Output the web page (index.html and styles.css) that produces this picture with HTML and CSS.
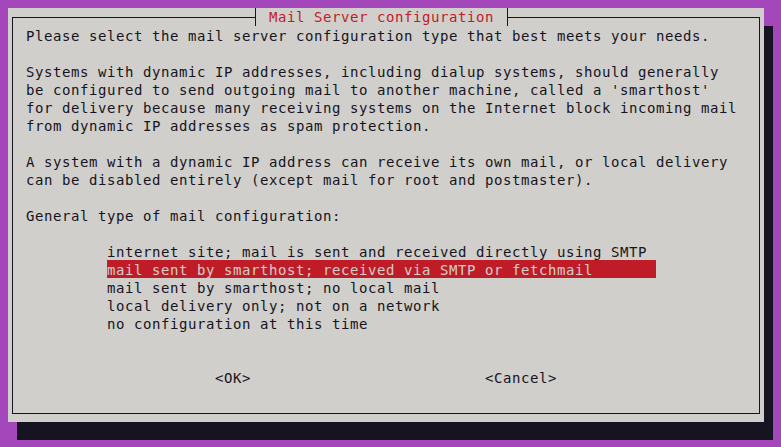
FILE: index.html
```html
<!DOCTYPE html>
<html>
<head>
<meta charset="utf-8">
<link rel="stylesheet" href="styles.css">
</head>
<body>
<div class="dialog">
  <div class="frame">
    <div class="title">Mail Server configuration</div>
    <div class="text">
      <div class="para">Please select the mail server configuration type that best meets your needs.</div>
      <div class="para">Systems with dynamic IP addresses, including dialup systems, should generally
be configured to send outgoing mail to another machine, called a 'smarthost'
for delivery because many receiving systems on the Internet block incoming mail
from dynamic IP addresses as spam protection.</div>
      <div class="para">A system with a dynamic IP address can receive its own mail, or local delivery
can be disabled entirely (except mail for root and postmaster).</div>
      <div class="para">General type of mail configuration:</div>
      <ul class="menu">
        <li class="item">internet site; mail is sent and received directly using SMTP</li>
        <li class="item selected">mail sent by smarthost; received via SMTP or fetchmail</li>
        <li class="item">mail sent by smarthost; no local mail</li>
        <li class="item">local delivery only; not on a network</li>
        <li class="item">no configuration at this time</li>
      </ul>
      <div class="buttons">
        <span class="btn ok">&lt;OK&gt;</span>
        <span class="btn cancel">&lt;Cancel&gt;</span>
      </div>
    </div>
  </div>
</div>
</body>
</html>
```
FILE: styles.css
```css
html, body {
  margin: 0;
  padding: 0;
  background: #a347ba;
  height: 100%;
  overflow: hidden;
}
body {
  font-family: "DejaVu Sans Mono", "Liberation Mono", monospace;
  font-size: 14px;
  letter-spacing: 0.5713px;
  line-height: 18px;
  color: #171421;
}
.dialog {
  margin: 8px 0 0 8px;
  width: 756px;
  height: 414px;
  box-sizing: border-box;
  padding: 9px 4px 8px 4px;
  background: #d0cfcc;
  box-shadow: 9px 18px 0 #171421;
}
.frame {
  position: relative;
  box-sizing: border-box;
  width: 748px;
  height: 397px;
  border: 1px solid #171421;
  padding: 8px 0 0 13px;
}
.title {
  position: absolute;
  top: -10px;
  left: 242px;
  width: 253px;
  height: 18px;
  box-sizing: border-box;
  border-left: 1px solid #171421;
  border-right: 1px solid #171421;
  background: #d0cfcc;
  color: #c01c28;
  padding: 1px 0 0 13px;
  line-height: 17px;
  white-space: pre;
}
.para {
  padding-top: 1px;
  margin-bottom: 17px;
  white-space: pre;
}
.menu {
  list-style: none;
  margin: 17px 0 0 81px;
  padding: 0;
}
.item {
  width: 549px;
  height: 18px;
  box-sizing: border-box;
  padding-top: 1px;
  white-space: pre;
}
.item.selected {
  background: #c01c28;
  color: #d0cfcc;
}
.buttons {
  display: flex;
  margin-top: 36px;
  padding-top: 1px;
  padding-left: 189px;
  gap: 234px;
  white-space: pre;
}
```
